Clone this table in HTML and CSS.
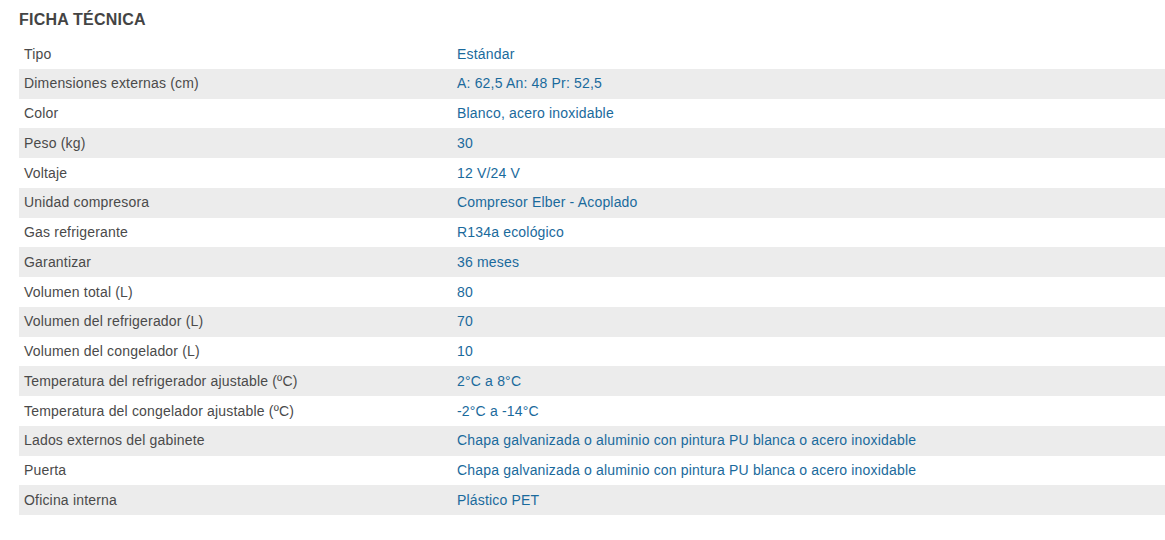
FILE: index.html
```html
<!DOCTYPE html>
<html lang="es">
<head>
<meta charset="utf-8">
<title>Ficha técnica</title>
<link rel="stylesheet" href="styles.css">
</head>
<body>
<div class="spec">
  <h2 class="spec-title">FICHA TÉCNICA</h2>
  <table class="spec-table">
    <tbody>
      <tr><td class="k">Tipo</td><td class="v">Estándar</td></tr>
      <tr><td class="k">Dimensiones externas (cm)</td><td class="v">A: 62,5 An: 48 Pr: 52,5</td></tr>
      <tr><td class="k">Color</td><td class="v">Blanco, acero inoxidable</td></tr>
      <tr><td class="k">Peso (kg)</td><td class="v">30</td></tr>
      <tr><td class="k">Voltaje</td><td class="v">12 V/24 V</td></tr>
      <tr><td class="k">Unidad compresora</td><td class="v">Compresor Elber - Acoplado</td></tr>
      <tr><td class="k">Gas refrigerante</td><td class="v">R134a ecológico</td></tr>
      <tr><td class="k">Garantizar</td><td class="v">36 meses</td></tr>
      <tr><td class="k">Volumen total (L)</td><td class="v">80</td></tr>
      <tr><td class="k">Volumen del refrigerador (L)</td><td class="v">70</td></tr>
      <tr><td class="k">Volumen del congelador (L)</td><td class="v">10</td></tr>
      <tr><td class="k">Temperatura del refrigerador ajustable (ºC)</td><td class="v">2°C a 8°C</td></tr>
      <tr><td class="k">Temperatura del congelador ajustable (ºC)</td><td class="v">-2°C a -14°C</td></tr>
      <tr><td class="k">Lados externos del gabinete</td><td class="v">Chapa galvanizada o aluminio con pintura PU blanca o acero inoxidable</td></tr>
      <tr><td class="k">Puerta</td><td class="v">Chapa galvanizada o aluminio con pintura PU blanca o acero inoxidable</td></tr>
      <tr><td class="k">Oficina interna</td><td class="v">Plástico PET</td></tr>
    </tbody>
  </table>
</div>
</body>
</html>
```

FILE: styles.css
```css
html, body {
  margin: 0;
  padding: 0;
  background: #fff;
}
body {
  font-family: "Liberation Sans", Arial, sans-serif;
  font-size: 14px;
  color: #444;
}
.spec {
  padding: 0 0 0 19px;
}
.spec-title {
  margin: 11px 0 10px;
  font-size: 16px;
  font-weight: bold;
  color: #444;
  line-height: 18px;
  letter-spacing: 0.22px;
}
.spec-table {
  width: 100%;
  border-collapse: collapse;
  border-spacing: 0;
}
.spec-table td {
  padding: 6.5px 5px 5.5px;
  line-height: 17.75px;
  vertical-align: middle;
  text-align: left;
  letter-spacing: 0.18px;
}
.spec-table tr:nth-child(even) td {
  background: #ececec;
}
.spec-table .k {
  width: 423px;
  color: #4a4a4a;
}
.spec-table .v {
  color: #1a6a9c;
}
```
